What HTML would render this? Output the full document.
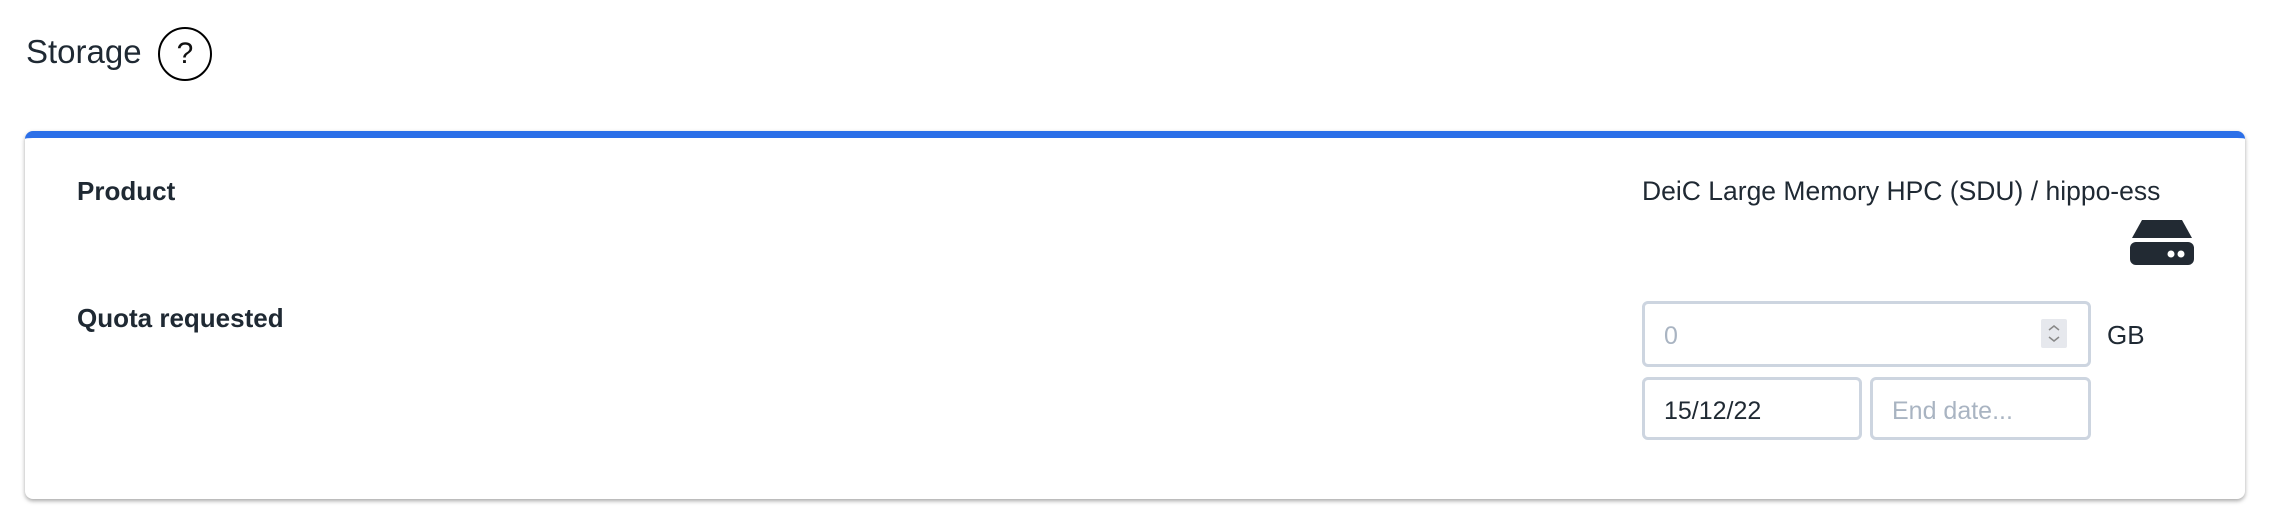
<!DOCTYPE html>
<html><head><style>
body{margin:0;width:2272px;height:530px;background:#fff;font-family:"Liberation Sans",sans-serif;color:#1f2933;position:relative;overflow:hidden}
.a{position:absolute}
.inp{position:absolute;box-sizing:border-box;border:3px solid #cdd5e0;border-radius:6px;background:#fff;font-size:25px}
</style></head><body>
<div class="a" style="left:26px;top:33px;font-size:33px;">Storage</div>
<div class="a" style="left:158px;top:27px;width:54px;height:54px;border:2.5px solid #000;border-radius:50%;box-sizing:border-box;text-align:center;line-height:50px;font-size:30px;color:#111">?</div>
<div class="a" style="left:25px;top:131px;width:2220px;height:368px;background:#fff;border-radius:8px;border-top:7px solid #2b6fe8;box-sizing:border-box;box-shadow:0 2px 4px rgba(0,0,0,.35)"></div>
<div class="a" style="left:77px;top:176px;font-size:26px;font-weight:bold">Product</div>
<div class="a" style="left:77px;top:303px;font-size:26px;font-weight:bold">Quota requested</div>
<div class="a" style="left:1642px;top:176px;font-size:26.5px;">DeiC Large Memory HPC (SDU) / hippo-ess</div>
<svg class="a" style="left:2130px;top:220px" width="64" height="45" viewBox="0 0 64 45"><path d="M12 0H52L62 18H2Z" fill="#222a33"/><rect x="0" y="22" width="64" height="23" rx="6" fill="#222a33"/><circle cx="41" cy="34" r="3.5" fill="#fff"/><circle cx="51" cy="34" r="3.5" fill="#fff"/></svg>
<div class="inp" style="left:1642px;top:301px;width:449px;height:66px;"><span class="a" style="left:19px;top:18px;color:#a9b4c2">0</span>
<div class="a" style="left:396px;top:15px;width:26px;height:29px;background:#e6e8ed;border-radius:2px"><svg width="26" height="29"><path d="M8 11l5-4 5 4M8 18l5 4 5-4" fill="none" stroke="#888" stroke-width="1.5"/></svg></div></div>
<div class="a" style="left:2107px;top:320px;font-size:26px;">GB</div>
<div class="inp" style="left:1642px;top:377px;width:220px;height:63px;"><span class="a" style="left:19px;top:17px">15/12/22</span></div>
<div class="inp" style="left:1870px;top:377px;width:221px;height:63px;"><span class="a" style="left:19px;top:17px;color:#a9b4c2">End date...</span></div>
</body></html>
